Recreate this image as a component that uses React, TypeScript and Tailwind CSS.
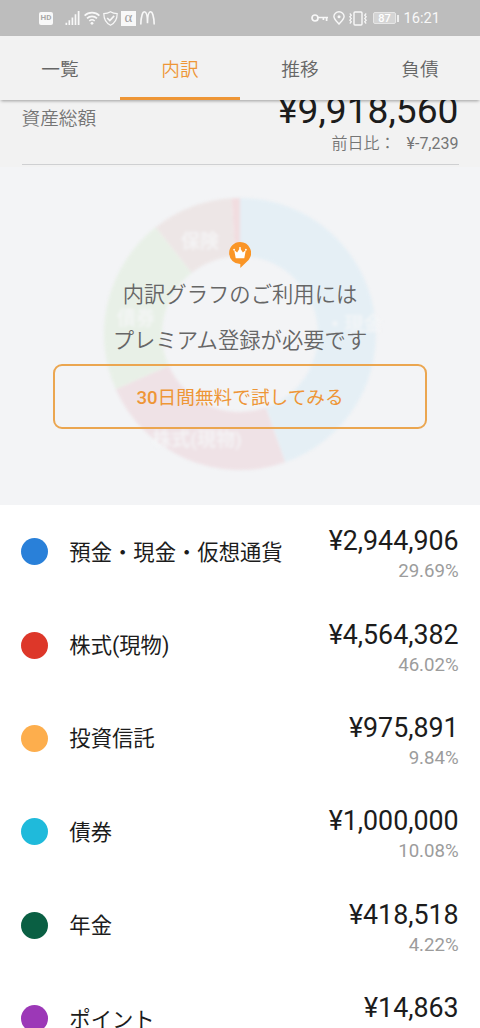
import React from "react";

const items = [
  { name: "預金・現金・仮想通貨", amount: "¥2,944,906", rate: "29.69%", dot: "bg-[#2980d9]" },
  { name: "株式(現物)", amount: "¥4,564,382", rate: "46.02%", dot: "bg-[#dd3729]" },
  { name: "投資信託", amount: "¥975,891", rate: "9.84%", dot: "bg-[#fdae4d]" },
  { name: "債券", amount: "¥1,000,000", rate: "10.08%", dot: "bg-[#1fbadb]" },
  { name: "年金", amount: "¥418,518", rate: "4.22%", dot: "bg-[#0a5f43]" },
  { name: "ポイント", amount: "¥14,863", rate: "", dot: "bg-[#9c38b7]" },
];

const tabs = ["一覧", "内訳", "推移", "負債"];

const slices = [
  { from: 0, to: 160.6, color: "#e5eff5" },
  { from: 160.6, to: 246, color: "#efe2e6" },
  { from: 246, to: 321.7, color: "#e8f0e7" },
  { from: 321.7, to: 356.5, color: "#ede6e6" },
  { from: 356.5, to: 360, color: "#f1dde0" },
];

function slicePath(from: number, to: number) {
  const point = (deg: number, r: number) => {
    const a = (deg * Math.PI) / 180;
    return `${(150 + r * Math.sin(a)).toFixed(2)} ${(150 - r * Math.cos(a)).toFixed(2)}`;
  };
  const large = to - from > 180 ? 1 : 0;
  return `M${point(from, 136)}A136 136 0 ${large} 1 ${point(to, 136)}L${point(to, 78)}A78 78 0 ${large} 0 ${point(from, 78)}Z`;
}

function StatusBar() {
  return (
    <div className="flex h-9 shrink-0 items-center justify-between bg-[#bdbdbd] pr-10 pl-[39px] text-[#f8f8f8]">
      <div className="flex items-center">
        <span className="flex h-[13px] w-[14px] items-center justify-center rounded-[2px] bg-[#f8f8f8] text-[8px] font-bold text-[#a8a8a8]">
          HD
        </span>
        <svg className="ml-3 h-[14px] w-[15px]" viewBox="0 0 15 15" fill="currentColor">
          <path d="M0 12.5h1.8V15H0zM3.2 10H5v5H3.2zM6.5 7h1.8v8H6.5zM9.8 3.5h1.8V15H9.8zM13.1 0H15v15h-1.9z" />
        </svg>
        <svg className="ml-1 h-[14px] w-4" viewBox="0 0 16 14" fill="none" stroke="currentColor" strokeWidth="1.6">
          <path d="M.6 4.6a10.6 10.6 0 0 1 14.8 0M3 7.4a7.2 7.2 0 0 1 10 0M5.3 10a4 4 0 0 1 5.4 0" />
          <circle cx="8" cy="12.3" r="1.4" fill="currentColor" stroke="none" />
        </svg>
        <svg className="ml-[3px] h-[15px] w-[15px]" viewBox="0 0 15 15" fill="none" stroke="currentColor" strokeWidth="1.2">
          <path d="M7.5.8C5.5 2.1 3 2.6.8 2.6.8 8.4 2.7 12 7.5 14.3 12.3 12 14.2 8.4 14.2 2.6 12 2.6 9.5 2.1 7.5.8Z" />
          <path d="m4.2 7 2.6 2.6 4.4-4.7" strokeWidth="1.6" />
        </svg>
        <span className="ml-[3px] flex h-[15px] w-[15px] items-center justify-center bg-[#f8f8f8] pb-[2px] font-['Liberation_Serif',serif] text-[15px] leading-none text-[#a0a0a0]">
          α
        </span>
        <svg className="ml-1 h-[14px] w-[15px]" viewBox="0 0 15 14" fill="none" stroke="currentColor" strokeWidth="1.6">
          <path d="M.8 13.5C1 6.5 2.4.8 4.4.8S7.5 6 7.5 12.2C7.5 6 8.6.8 10.6.8S14 6.5 14.2 13.5" />
        </svg>
      </div>
      <div className="flex items-center">
        <svg className="h-[10px] w-[17px]" viewBox="0 0 17 10" fill="none" stroke="currentColor" strokeWidth="1.7">
          <circle cx="4" cy="5" r="3" />
          <path d="M7 4.5h10M15.6 4.5v3.6M12.4 4.5v2.6" />
        </svg>
        <svg className="ml-[5px] h-[14px] w-[12px]" viewBox="0 0 12 14" fill="none" stroke="currentColor" strokeWidth="1.4">
          <path d="M6 13.1C3 9.8.9 7.9.9 5.5a5.1 4.7 0 0 1 10.2 0C11.1 7.9 9 9.8 6 13.1Z" />
          <circle cx="6" cy="5.8" r="1.5" fill="currentColor" stroke="none" />
        </svg>
        <svg className="ml-1 h-[15px] w-[18px]" viewBox="0 0 18 15" fill="none" stroke="currentColor" strokeWidth="1.4">
          <rect x="5" y="1" width="8" height="13" rx="1" />
          <path d="m.8 2.5 1.5 1.7L.8 5.8l1.5 1.7L.8 9.2l1.5 1.6-1.5 1.7M17.2 2.5l-1.5 1.7 1.5 1.6-1.5 1.7 1.5 1.7-1.5 1.6 1.5 1.7" strokeWidth="1.2" />
        </svg>
        <span className="ml-[6px] flex h-3 w-[23px] items-center justify-center rounded-[2px] border border-[#e6e6e6] bg-[#d4d4d4] text-[11px] leading-none font-medium text-white">
          87
        </span>
        <span className="ml-px h-[7px] w-[1.5px] bg-[#ededed]" />
        <span className="ml-[5px] text-[14.67px] leading-none">16:21</span>
      </div>
    </div>
  );
}

function Donut() {
  return (
    <svg className="absolute top-[16.5px] left-[90px] h-[300px] w-[300px] overflow-visible blur-[1.4px]" viewBox="0 0 300 300">
      {slices.map((s) => (
        <path key={s.from} d={slicePath(s.from, s.to)} fill={s.color} />
      ))}
      <g fill="#f5f6f8" fillOpacity="0.8" fontSize="19" fontWeight="700" textAnchor="middle">
        <text x="110" y="64">保険</text>
        <text x="46" y="141">債券</text>
        <text x="264" y="147">・現金</text>
        <text x="107" y="262">株式(現物)</text>
      </g>
    </svg>
  );
}

function CrownPin() {
  return (
    <svg className="relative h-[27px] w-[22px]" viewBox="0 0 22 27">
      <path d="M11 0a11 11 0 0 1 8.6 17.9L11.3 26V22A11 11 0 1 1 11 0Z" fill="#fa9526" />
      <path d="m5.2 8 2.9 2.5L11 5.9l2.9 4.6L16.8 8l-1.5 8.2H6.7Z" fill="#fff" />
      <circle cx="5.1" cy="7.7" r=".9" fill="#fff" />
      <circle cx="11" cy="6" r=".9" fill="#fff" />
      <circle cx="16.9" cy="7.7" r=".9" fill="#fff" />
    </svg>
  );
}

export default function App() {
  return (
    <div className="flex h-[1028px] w-[480px] flex-col overflow-hidden bg-white font-[Roboto,'Noto_Sans_CJK_JP',sans-serif] text-[#1c1c1c]">
      <StatusBar />
      <nav className="relative z-10 grid h-16 shrink-0 grid-cols-4 bg-[#f2f2f2] text-[18.67px] font-[350] text-[#666] shadow-[0_2px_3px_-1px_rgba(0,0,0,0.35)]">
        {tabs.map((tab) => (
          <button
            key={tab}
            className={
              tab === "内訳"
                ? "border-b-[3px] border-[#ee9636] pt-[6px] text-[#ee9636]"
                : "border-b-[3px] border-transparent pt-[6px]"
            }
          >
            {tab}
          </button>
        ))}
      </nav>

      <section className="h-[67px] shrink-0 bg-[#f2f2f2] px-[21.5px]">
        <div className="flex h-[65px] items-start justify-between border-b border-[#cfd0d2]">
          <span className="mt-[5px] text-[18.67px] leading-7 font-[350] text-[#757575]">資産総額</span>
          <div className="-mt-[12px] flex flex-col items-end">
            <span className="text-[37.2px] leading-[44px]">¥9,918,560</span>
            <span className="flex text-base leading-6 text-[#757575]">
              <span className="font-[350]">前日比：</span>
              <span className="ml-[11px]">¥-7,239</span>
            </span>
          </div>
        </div>
      </section>

      <section className="relative flex h-[338px] shrink-0 flex-col items-center bg-[#f3f4f6] pt-[75px]">
        <Donut />
        <CrownPin />
        <p className="relative mt-[3px] text-center text-[21.33px] leading-[46px] font-[350] text-[#666]">
          内訳グラフのご利用には
          <br />
          プレミアム登録が必要です
        </p>
        <button className="relative h-[65px] w-[374px] rounded-[9px] border-2 border-[#eba650] pt-[2px] text-[18.67px] text-[#ee9636]">
          <span className="font-medium">30</span>日間無料で試してみる
        </button>
      </section>

      <ul className="shrink-0">
        {items.map((item) => (
          <li key={item.name} className="flex h-[93.4px] items-center px-[21.33px]">
            <span className={`h-[27px] w-[27px] rounded-full ${item.dot}`} />
            <span className="mt-[2px] ml-[21px] text-[21.33px] leading-8">{item.name}</span>
            <div className="mt-[7px] ml-auto flex flex-col items-end">
              <span className="text-[26.8px] leading-8">{item.amount}</span>
              <span className="h-7 text-[18.67px] leading-7 text-[#9c9c9c]">{item.rate}</span>
            </div>
          </li>
        ))}
      </ul>
    </div>
  );
}
